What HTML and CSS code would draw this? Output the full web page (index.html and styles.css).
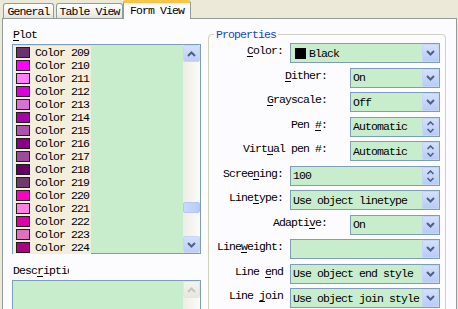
FILE: index.html
```html
<!DOCTYPE html>
<html>
<head>
<meta charset="utf-8">
<link rel="stylesheet" href="styles.css">
</head>
<body>
<div class="tabs">
  <div class="tab t-general">General</div>
  <div class="tab t-table">Table View</div>
  <div class="tab t-form active">Form View</div>
</div>
<div class="page">
  <div class="left">
    <div class="lbl plot-lbl"><u>P</u>lot</div>
    <div class="listbox">
      <div class="items">
        <div class="item"><span class="it"><span class="sw" style="background:#6B3270"></span>Color 209</span></div>
        <div class="item"><span class="it"><span class="sw" style="background:#FF00FF"></span>Color 210</span></div>
        <div class="item"><span class="it"><span class="sw" style="background:#FF7FFF"></span>Color 211</span></div>
        <div class="item"><span class="it"><span class="sw" style="background:#DD00DD"></span>Color 212</span></div>
        <div class="item"><span class="it"><span class="sw" style="background:#DA70D6"></span>Color 213</span></div>
        <div class="item"><span class="it"><span class="sw" style="background:#AA00AA"></span>Color 214</span></div>
        <div class="item"><span class="it"><span class="sw" style="background:#AA55AA"></span>Color 215</span></div>
        <div class="item"><span class="it"><span class="sw" style="background:#880088"></span>Color 216</span></div>
        <div class="item"><span class="it"><span class="sw" style="background:#9A4C9A"></span>Color 217</span></div>
        <div class="item"><span class="it"><span class="sw" style="background:#660066"></span>Color 218</span></div>
        <div class="item"><span class="it"><span class="sw" style="background:#6E3A6E"></span>Color 219</span></div>
        <div class="item"><span class="it"><span class="sw" style="background:#FF00C0"></span>Color 220</span></div>
        <div class="item"><span class="it"><span class="sw" style="background:#FF80E0"></span>Color 221</span></div>
        <div class="item"><span class="it"><span class="sw" style="background:#DD00A5"></span>Color 222</span></div>
        <div class="item"><span class="it"><span class="sw" style="background:#E070C0"></span>Color 223</span></div>
        <div class="item"><span class="it"><span class="sw" style="background:#B0007F"></span>Color 224</span></div>
      </div>
      <div class="vscroll">
        <div class="sbtn"><svg width="9" height="6" viewBox="0 0 9 6"><path d="M1 5 L4.5 1.5 L8 5" fill="none" stroke="#4D6185" stroke-width="2"/></svg></div>
        <div class="track"><div class="thumb" style="margin-top:140px"></div></div>
        <div class="sbtn"><svg width="9" height="6" viewBox="0 0 9 6"><path d="M1 1 L4.5 4.5 L8 1" fill="none" stroke="#4D6185" stroke-width="2"/></svg></div>
      </div>
    </div>
    <div class="lbl desc-lbl"><span class="clip">Desc<u>r</u>iption</span></div>
    <div class="textarea">
      <div class="items"></div>
      <div class="vscroll">
        <div class="sbtn dis"><svg width="9" height="6" viewBox="0 0 9 6"><path d="M1 5 L4.5 1.5 L8 5" fill="none" stroke="#C9C7BA" stroke-width="2"/></svg></div>
        <div class="track"></div>
      </div>
    </div>
  </div>
  <fieldset class="props">
    <legend>Properties</legend>
    <div class="rows">
      <div class="row">
        <div class="plbl"><u>C</u>olor:</div>
        <div class="combo"><span class="csw"></span><span class="val">Black</span><div class="dbtn"><svg width="9" height="6" viewBox="0 0 9 6"><path d="M1 1 L4.5 4.5 L8 1" fill="none" stroke="#4D6185" stroke-width="2"/></svg></div></div>
      </div>
      <div class="row narrow">
        <div class="plbl"><u>D</u>ither:</div>
        <div class="combo"><span class="val">On</span><div class="dbtn"><svg width="9" height="6" viewBox="0 0 9 6"><path d="M1 1 L4.5 4.5 L8 1" fill="none" stroke="#4D6185" stroke-width="2"/></svg></div></div>
      </div>
      <div class="row narrow">
        <div class="plbl"><u>G</u>rayscale:</div>
        <div class="combo"><span class="val">Off</span><div class="dbtn"><svg width="9" height="6" viewBox="0 0 9 6"><path d="M1 1 L4.5 4.5 L8 1" fill="none" stroke="#4D6185" stroke-width="2"/></svg></div></div>
      </div>
      <div class="row narrow">
        <div class="plbl">Pen <u>#</u>:</div>
        <div class="combo"><span class="val">Automatic</span><div class="dbtn spin"><svg width="9" height="5" viewBox="0 0 9 5"><path d="M1.5 4 L4.5 1 L7.5 4" fill="none" stroke="#4D6185" stroke-width="1.6"/></svg><svg width="9" height="5" viewBox="0 0 9 5"><path d="M1.5 1 L4.5 4 L7.5 1" fill="none" stroke="#4D6185" stroke-width="1.6"/></svg></div></div>
      </div>
      <div class="row narrow">
        <div class="plbl">Virt<u>u</u>al pen #:</div>
        <div class="combo"><span class="val">Automatic</span><div class="dbtn spin"><svg width="9" height="5" viewBox="0 0 9 5"><path d="M1.5 4 L4.5 1 L7.5 4" fill="none" stroke="#4D6185" stroke-width="1.6"/></svg><svg width="9" height="5" viewBox="0 0 9 5"><path d="M1.5 1 L4.5 4 L7.5 1" fill="none" stroke="#4D6185" stroke-width="1.6"/></svg></div></div>
      </div>
      <div class="row">
        <div class="plbl">Scree<u>n</u>ing:</div>
        <div class="combo"><span class="val">100</span><div class="dbtn spin"><svg width="9" height="5" viewBox="0 0 9 5"><path d="M1.5 4 L4.5 1 L7.5 4" fill="none" stroke="#4D6185" stroke-width="1.6"/></svg><svg width="9" height="5" viewBox="0 0 9 5"><path d="M1.5 1 L4.5 4 L7.5 1" fill="none" stroke="#4D6185" stroke-width="1.6"/></svg></div></div>
      </div>
      <div class="row">
        <div class="plbl">Line<u>t</u>ype:</div>
        <div class="combo"><span class="val">Use object linetype</span><div class="dbtn"><svg width="9" height="6" viewBox="0 0 9 6"><path d="M1 1 L4.5 4.5 L8 1" fill="none" stroke="#4D6185" stroke-width="2"/></svg></div></div>
      </div>
      <div class="row narrow">
        <div class="plbl">Adapti<u>v</u>e:</div>
        <div class="combo"><span class="val">On</span><div class="dbtn"><svg width="9" height="6" viewBox="0 0 9 6"><path d="M1 1 L4.5 4.5 L8 1" fill="none" stroke="#4D6185" stroke-width="2"/></svg></div></div>
      </div>
      <div class="row">
        <div class="plbl">Line<u>w</u>eight:</div>
        <div class="combo"><span class="val"></span><div class="dbtn"><svg width="9" height="6" viewBox="0 0 9 6"><path d="M1 1 L4.5 4.5 L8 1" fill="none" stroke="#4D6185" stroke-width="2"/></svg></div></div>
      </div>
      <div class="row">
        <div class="plbl">Line <u>e</u>nd</div>
        <div class="combo"><span class="val">Use object end style</span><div class="dbtn"><svg width="9" height="6" viewBox="0 0 9 6"><path d="M1 1 L4.5 4.5 L8 1" fill="none" stroke="#4D6185" stroke-width="2"/></svg></div></div>
      </div>
      <div class="row">
        <div class="plbl">Line <u>j</u>oin</div>
        <div class="combo"><span class="val">Use object join style</span><div class="dbtn"><svg width="9" height="6" viewBox="0 0 9 6"><path d="M1 1 L4.5 4.5 L8 1" fill="none" stroke="#4D6185" stroke-width="2"/></svg></div></div>
      </div>
    </div>
  </fieldset>
</div>
</body>
</html>
```
FILE: styles.css
```css
html, body {
  margin: 0;
  padding: 0;
}
body {
  width: 458px;
  height: 309px;
  overflow: hidden;
  background: #ECE9D8;
  font-family: "Liberation Mono", monospace;
  font-size: 11.5px;
  letter-spacing: -0.9px;
  color: #000;
}
u {
  text-decoration-thickness: 1px;
  text-underline-offset: 2px;
}

/* tabs */
.tabs {
  display: flex;
  align-items: flex-end;
  height: 18px;
  padding-left: 3px;
}
.tab {
  box-sizing: border-box;
  height: 15px;
  border: 1px solid #919B9C;
  border-bottom: none;
  border-radius: 3px 3px 0 0;
  background: linear-gradient(#FFFFFF, #F3F2EC 60%, #E6E4DA);
  display: flex;
  align-items: center;
  justify-content: center;
  line-height: 13px;
}
.t-general { width: 51px; }
.t-table { width: 67px; margin-left: 2px; }
.t-form { width: 68px; margin-left: 0; }
.tab.active {
  position: relative;
  z-index: 1;
  height: 19px;
  margin-bottom: -1px;
  background: #FCFCFE;
  border-top: 3px solid #FBC449;
  padding-bottom: 2px;
}

/* page */
.page {
  box-sizing: border-box;
  margin-left: 2px;
  width: 455px;
  height: 400px;
  border: 1px solid #919B9C;
  background: #FCFCFE;
  display: flex;
  align-items: flex-start;
  padding: 9px 0 0 9px;
}
.left {
  width: 189px;
  display: flex;
  flex-direction: column;
}
.lbl {
  line-height: 13px;
  height: 13px;
  padding-left: 1px;
}
.plot-lbl { margin-bottom: 3px; }
.desc-lbl { margin-top: 10px; margin-bottom: 3px; }
.clip {
  display: inline-block;
  width: 56px;
  overflow: hidden;
  white-space: nowrap;
}

.listbox, .textarea {
  box-sizing: border-box;
  border: 1px solid #7F9DB9;
  background: #C7EDCC;
  display: flex;
}
.listbox { height: 210px; }
.textarea { height: 60px; }
.items {
  flex: 1;
  padding-top: 1px;
}
.item {
  height: 13px;
  display: flex;
  align-items: center;
}
.it {
  display: inline-flex;
  align-items: center;
  height: 13px;
  background: #F3EFDC;
  padding: 0 2px 0 3px;
  line-height: 13px;
}
.sw {
  box-sizing: border-box;
  width: 14px;
  height: 11px;
  border: 1px solid #1E1E1E;
  margin-right: 5px;
}

/* scrollbar */
.vscroll {
  width: 17px;
  display: flex;
  flex-direction: column;
  background: linear-gradient(to right, #EEEDE5, #FBFBF8);
}
.sbtn {
  box-sizing: border-box;
  width: 17px;
  height: 17px;
  border: 1px solid #C7D5F7;
  border-radius: 2px;
  background: linear-gradient(#D3E0FD, #BCCEF7);
  display: flex;
  align-items: center;
  justify-content: center;
}
.sbtn.dis {
  border-color: #E8E6DC;
  background: linear-gradient(#F4F3EE, #E8E6DE);
}
.track {
  flex: 1;
}
.thumb {
  box-sizing: border-box;
  width: 17px;
  height: 11px;
  border: 1px solid #B4C6F5;
  border-radius: 2px;
  background: linear-gradient(to right, #C9D8FC, #B9CCF8);
}

/* properties group */
.props {
  box-sizing: border-box;
  width: 238px;
  margin: 0 0 0 7px;
  padding: 2px 5px 10px 0;
  border: 1px solid #D0D0BF;
  border-radius: 4px;
  min-width: 0;
}
.props legend {
  color: #1846C0;
  line-height: 13px;
  padding: 0 2px;
  margin-left: 5px;
}
.rows {
  display: flex;
  flex-direction: column;
  gap: 4.5px;
}
.row {
  display: flex;
  align-items: flex-start;
  height: 20px;
}
.plbl {
  box-sizing: border-box;
  width: 74px;
  margin-right: 7px;
  text-align: right;
  line-height: 13px;
  padding-top: 1px;
  white-space: nowrap;
}
.row.narrow .plbl {
  width: 118px;
  margin-right: 23px;
}
.combo {
  box-sizing: border-box;
  flex: 1;
  height: 20px;
  border: 1px solid #7F9DB9;
  background: #C7EDCC;
  display: flex;
  align-items: center;
  padding-left: 2px;
  white-space: nowrap;
}
.csw {
  width: 11px;
  height: 11px;
  background: #000;
  margin-left: 2px;
  margin-right: 3px;
}
.val {
  flex: 1;
  line-height: 13px;
  overflow: hidden;
}
.dbtn {
  box-sizing: border-box;
  width: 17px;
  height: 18px;
  border: 1px solid #C5D4F8;
  border-radius: 2px;
  background: linear-gradient(#D3E0FD, #B9CBF6);
  display: flex;
  align-items: center;
  justify-content: center;
}
.dbtn.spin {
  flex-direction: column;
  gap: 2px;
}
```
